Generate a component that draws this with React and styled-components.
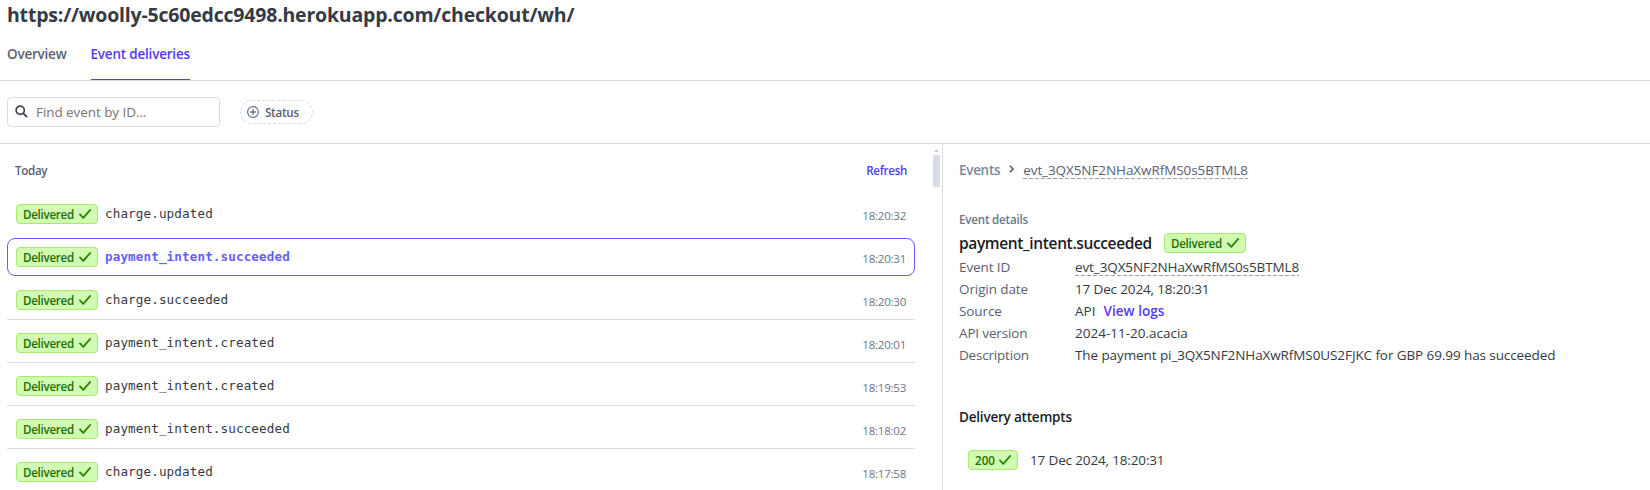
import React from 'react';
import styled, { createGlobalStyle } from 'styled-components';

const color = {
  line: '#d8dee4',
  text: '#353a44',
  strong: '#1a1b25',
  muted: '#596171',
  faint: '#6c7688',
  brand: '#533afd',
  selected: '#675dff',
};

const GlobalStyle = createGlobalStyle`
  *, *::before, *::after { box-sizing: border-box; }
  html, body, #root { height: 100%; }
  body {
    margin: 0;
    overflow: hidden;
    background: #fff;
    color: ${color.text};
    font-family: "Open Sans", "Noto Sans", sans-serif;
    font-size: 13.5px;
    line-height: 20px;
  }
`;

const Page = styled.div`
  display: flex;
  flex-direction: column;
  height: 490px;
`;

const Text = styled.span`
  font-size: ${(p) => p.$size || 13.5}px;
  font-weight: ${(p) => p.$weight || 400};
  color: ${(p) => p.$color || color.text};
  letter-spacing: ${(p) => p.$track || 0}px;
  white-space: nowrap;
`;

const Title = styled.h1`
  margin: 0;
  padding-left: 7px;
  height: 30px;
  line-height: 30px;
  font-size: 19.5px;
  font-weight: 700;
  letter-spacing: -0.2px;
`;

const Tabs = styled.nav`
  display: flex;
  gap: 24px;
  height: 51px;
  padding-left: 7px;
  border-bottom: 1px solid ${color.line};
`;

const Tab = styled.a`
  width: ${(p) => p.$width}px;
  padding-top: 14px;
  font-weight: 600;
  white-space: nowrap;
  letter-spacing: ${(p) => (p.$active ? -0.2 : -0.22)}px;
  color: ${(p) => (p.$active ? color.brand : color.muted)};
  border-bottom: ${(p) => (p.$active ? `1px solid ${color.brand}` : 'none')};
`;

const Toolbar = styled.div`
  display: flex;
  align-items: center;
  gap: 20px;
  height: 63px;
  padding-left: 7px;
  border-bottom: 1px solid ${color.line};
`;

const SearchBox = styled.label`
  display: flex;
  align-items: center;
  gap: 8px;
  width: 213px;
  height: 30px;
  padding-left: 7px;
  border: 1px solid ${color.line};
  border-radius: 4px;

  svg { margin-bottom: 2px; }
`;

const SearchInput = styled.input`
  width: 160px;
  padding: 0;
  border: 0;
  outline: 0;
  background: none;
  font: inherit;
  letter-spacing: -0.07px;
  &::placeholder { color: #757575; opacity: 1; }
`;

const FilterPill = styled.button`
  display: flex;
  align-items: center;
  gap: 6px;
  width: 73px;
  height: 24px;
  padding: 0 0 0 6px;
  border: 1px dashed ${color.line};
  border-radius: 12px;
  background: none;
  font-family: inherit;
`;

const Body = styled.div`
  display: flex;
  flex: 1;
  min-height: 0;
`;

const ListPane = styled.section`
  display: flex;
  width: 943px;
  border-right: 1px solid ${color.line};
`;

const List = styled.div`
  width: 908px;
  margin-left: 7px;
`;

const ListHeader = styled.div`
  display: flex;
  justify-content: space-between;
  height: 47px;
  padding: 17px 8px 0;
`;

const Row = styled.div`
  display: flex;
  align-items: flex-start;
  height: 43px;
  padding: 13px 9px 0;
  border-bottom: 1px solid ${(p) => (p.$divided ? color.line : 'transparent')};
`;

const SelectedRow = styled(Row)`
  height: 38px;
  margin: 4px 0 1px;
  padding: 8px 8px 0;
  border: 1px solid ${color.selected};
  border-radius: 8px;
`;

const EventName = styled.span`
  flex: 1;
  margin-left: 7px;
  font-family: "DejaVu Sans Mono", "Liberation Mono", monospace;
  font-size: 12.6px;
  letter-spacing: 0.12px;
  line-height: 20px;
  font-weight: ${(p) => (p.$selected ? 700 : 400)};
  color: ${(p) => (p.$selected ? color.selected : color.text)};
`;

const Time = styled.time`
  margin-top: 2px;
  font-size: 11.6px;
  letter-spacing: -0.28px;
  color: ${color.faint};
`;

const BadgeBox = styled.span`
  display: inline-flex;
  align-items: center;
  justify-content: space-between;
  flex: none;
  width: ${(p) => p.$width}px;
  height: 20px;
  padding: 0 6px;
  border: 1px solid #a6eb6b;
  border-radius: 4px;
  background: #d1fab3;
`;

const BadgeLabel = styled(Text)`
  padding-top: 1px;
`;

const ScrollTrack = styled.div`
  display: flex;
  flex-direction: column;
  align-items: center;
  gap: 3px;
  width: 7px;
  margin-left: 18px;
  padding-top: 5px;
`;

const ScrollThumb = styled.div`
  width: 7px;
  height: 32px;
  background: ${color.line};
`;

const DetailPane = styled.section`
  flex: 1;
  padding: 16px 0 0 16px;
`;

const Breadcrumb = styled.div`
  display: flex;
  align-items: center;
  height: 20px;
`;

const Chevron = styled.svg`
  margin: 0 9px 2px 9px;
`;

const CopyId = styled(Text)`
  height: 18px;
  line-height: 18px;
  background: repeating-linear-gradient(90deg, #95a0b8 0 4px, transparent 4px 6px) left bottom / 100% 1px no-repeat;
`;

const Eyebrow = styled.div`
  margin-top: 29px;
  height: 21px;
`;

const EventHeading = styled.div`
  display: flex;
  align-items: center;
  justify-content: space-between;
  width: 287px;
  height: 26px;
`;

const Fields = styled.dl`
  display: grid;
  grid-template-columns: 116px 1fr;
  grid-auto-rows: 22px;
  align-items: center;
  margin: 0;
`;

const Term = styled.dt`
  line-height: 22px;
`;

const Value = styled.dd`
  display: flex;
  align-items: center;
  gap: 8px;
  margin: 0;
`;

const AttemptsHeading = styled.div`
  margin-top: 41px;
  height: 20px;
`;

const Attempt = styled.div`
  display: flex;
  align-items: center;
  gap: 12px;
  margin-top: 23px;
  padding-left: 9px;
`;

const CheckIcon = () => (
  <svg width="12" height="10" viewBox="0 0 12 10" fill="none">
    <path d="M1 5.4 4.3 8.8 11.1 1" stroke="#2b8700" strokeWidth="1.9" strokeLinecap="round" strokeLinejoin="round" />
  </svg>
);

const SearchIcon = () => (
  <svg width="13" height="13" viewBox="0 0 13 13" fill="none">
    <circle cx="5.2" cy="5.2" r="4.1" stroke="#414552" strokeWidth="1.7" />
    <path d="m8.3 8.3 3.3 3.3" stroke="#414552" strokeWidth="1.9" strokeLinecap="round" />
  </svg>
);

const PlusCircleIcon = () => (
  <svg width="12" height="12" viewBox="0 0 12 12" fill="none" stroke="#6c7688">
    <circle cx="6" cy="6" r="5.4" strokeWidth="1.2" />
    <path d="M6 3v6M3 6h6" strokeWidth="1.3" />
  </svg>
);

const Badge = ({ label, width = 82 }) => (
  <BadgeBox $width={width}>
    <BadgeLabel $size={11.6} $weight={600} $color="#217005" $track={label === '200' ? 0 : -0.29}>{label}</BadgeLabel>
    <CheckIcon />
  </BadgeBox>
);

const events = [
  { name: 'charge.updated', time: '18:20:32' },
  { name: 'payment_intent.succeeded', time: '18:20:31', selected: true },
  { name: 'charge.succeeded', time: '18:20:30', divided: true },
  { name: 'payment_intent.created', time: '18:20:01', divided: true },
  { name: 'payment_intent.created', time: '18:19:53', divided: true },
  { name: 'payment_intent.succeeded', time: '18:18:02', divided: true },
  { name: 'charge.updated', time: '18:17:58', divided: true },
];

const EventRow = ({ name, time, selected, divided }) => {
  const Container = selected ? SelectedRow : Row;
  return (
    <Container $divided={divided}>
      <Badge label="Delivered" />
      <EventName $selected={selected}>{name}</EventName>
      <Time>{time}</Time>
    </Container>
  );
};

const Field = ({ term, track, children }) => (
  <>
    <Term><Text $color={color.muted} $track={track}>{term}</Text></Term>
    <Value>{children}</Value>
  </>
);

export default function App() {
  return (
    <Page>
      <GlobalStyle />
      <Title>https://woolly-5c60edcc9498.herokuapp.com/checkout/wh/</Title>
      <Tabs>
        <Tab $width={59.5}>Overview</Tab>
        <Tab $width={99.5} $active>Event deliveries</Tab>
      </Tabs>
      <Toolbar>
        <SearchBox>
          <SearchIcon />
          <SearchInput placeholder="Find event by ID..." />
        </SearchBox>
        <FilterPill>
          <PlusCircleIcon />
          <Text $size={11.6} $weight={600} $color={color.muted} $track={-0.25}>Status</Text>
        </FilterPill>
      </Toolbar>
      <Body>
        <ListPane>
          <List>
            <ListHeader>
              <Text $size={11.6} $weight={600} $color={color.muted} $track={-0.3}>Today</Text>
              <Text $size={11.6} $weight={600} $color={color.brand} $track={-0.32}>Refresh</Text>
            </ListHeader>
            {events.map((event) => <EventRow key={event.time} {...event} />)}
          </List>
          <ScrollTrack>
            <svg width="5" height="3" viewBox="0 0 5 3"><path d="M0 3 2.5 0 5 3z" fill="#c9d0d8" /></svg>
            <ScrollThumb />
          </ScrollTrack>
        </ListPane>
        <DetailPane>
          <Breadcrumb>
            <Text $weight={600} $color="#7d8797" $track={-0.3}>Events</Text>
            <Chevron width="5" height="8" viewBox="0 0 5 8" fill="none">
              <path d="m.8.8 3.2 3.2L.8 7.2" stroke="#596171" strokeWidth="1.6" />
            </Chevron>
            <CopyId $color={color.muted} $track={-0.08}>evt_3QX5NF2NHaXwRfMS0s5BTML8</CopyId>
          </Breadcrumb>
          <Eyebrow><Text $size={11.6} $weight={600} $color={color.faint} $track={-0.2}>Event details</Text></Eyebrow>
          <EventHeading>
            <Text $size={15.5} $weight={600} $color={color.strong} $track={-0.36}>payment_intent.succeeded</Text>
            <Badge label="Delivered" />
          </EventHeading>
          <Fields>
            <Field term="Event ID" track={-0.1}><CopyId $track={-0.1}>evt_3QX5NF2NHaXwRfMS0s5BTML8</CopyId></Field>
            <Field term="Origin date" track={-0.1}><Text $track={-0.15}>17 Dec 2024, 18:20:31</Text></Field>
            <Field term="Source" track={-0.1}>
              <Text>API</Text>
              <Text $weight={600} $color={color.brand} $track={0.05}>View logs</Text>
            </Field>
            <Field term="API version" track={-0.15}><Text>2024-11-20.acacia</Text></Field>
            <Field term="Description" track={-0.2}>
              <Text $track={-0.09}>The payment pi_3QX5NF2NHaXwRfMS0US2FJKC for GBP 69.99 has succeeded</Text>
            </Field>
          </Fields>
          <AttemptsHeading><Text $weight={600} $color={color.strong} $track={-0.2}>Delivery attempts</Text></AttemptsHeading>
          <Attempt>
            <Badge label="200" width={50} />
            <Text $track={-0.15}>17 Dec 2024, 18:20:31</Text>
          </Attempt>
        </DetailPane>
      </Body>
    </Page>
  );
}
